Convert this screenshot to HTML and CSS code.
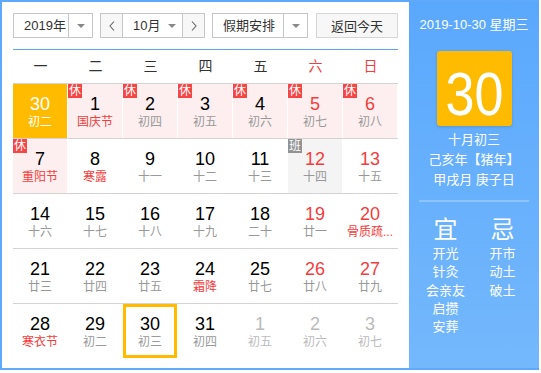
FILE: index.html
```html
<!DOCTYPE html>
<html lang="zh-CN">
<head>
    <meta charset="UTF-8">
    <title>万年历</title>
    <link rel="stylesheet" href="styles.css">
</head>
<body>
    <div class="calendar">
        <div class="main">
            <!-- 顶部工具栏 -->
            <div class="toolbar">
                <div class="select year">
                    <span class="select-text">2019年</span>
                    <span class="select-arrow"><i class="caret"></i></span>
                </div>
                <div class="month-switch">
                    <span class="nav"><svg width="6" height="10" viewBox="0 0 6 10"><polyline points="5,0.5 1,5 5,9.5" fill="none" stroke="#666" stroke-width="1.1"/></svg></span>
                    <span class="month-select">
                        <span class="select-text">10月</span>
                        <i class="caret"></i>
                    </span>
                    <span class="nav"><svg width="6" height="10" viewBox="0 0 6 10"><polyline points="1,0.5 5,5 1,9.5" fill="none" stroke="#666" stroke-width="1.1"/></svg></span>
                </div>
                <div class="select holiday">
                    <span class="select-text">假期安排</span>
                    <span class="select-arrow"><i class="caret"></i></span>
                </div>
                <button class="today-btn">返回今天</button>
            </div>

            <div class="weekdays">
                <span>一</span><span>二</span><span>三</span><span>四</span><span>五</span>
                <span class="weekend">六</span><span class="weekend">日</span>
            </div>

            <div class="days">
                <div class="week">
                    <div class="day hover"><span class="num">30</span><span class="lunar">初二</span></div>
                    <div class="day rest"><span class="tag">休</span><span class="num">1</span><span class="lunar fest">国庆节</span></div>
                    <div class="day rest"><span class="tag">休</span><span class="num">2</span><span class="lunar">初四</span></div>
                    <div class="day rest"><span class="tag">休</span><span class="num">3</span><span class="lunar">初五</span></div>
                    <div class="day rest"><span class="tag">休</span><span class="num">4</span><span class="lunar">初六</span></div>
                    <div class="day rest red"><span class="tag">休</span><span class="num">5</span><span class="lunar">初七</span></div>
                    <div class="day rest red"><span class="tag">休</span><span class="num">6</span><span class="lunar">初八</span></div>
                </div>
                <div class="week">
                    <div class="day rest"><span class="tag">休</span><span class="num">7</span><span class="lunar fest">重阳节</span></div>
                    <div class="day"><span class="num">8</span><span class="lunar fest">寒露</span></div>
                    <div class="day"><span class="num">9</span><span class="lunar">十一</span></div>
                    <div class="day"><span class="num">10</span><span class="lunar">十二</span></div>
                    <div class="day"><span class="num">11</span><span class="lunar">十三</span></div>
                    <div class="day work red"><span class="tag">班</span><span class="num">12</span><span class="lunar">十四</span></div>
                    <div class="day red"><span class="num">13</span><span class="lunar">十五</span></div>
                </div>
                <div class="week">
                    <div class="day"><span class="num">14</span><span class="lunar">十六</span></div>
                    <div class="day"><span class="num">15</span><span class="lunar">十七</span></div>
                    <div class="day"><span class="num">16</span><span class="lunar">十八</span></div>
                    <div class="day"><span class="num">17</span><span class="lunar">十九</span></div>
                    <div class="day"><span class="num">18</span><span class="lunar">二十</span></div>
                    <div class="day red"><span class="num">19</span><span class="lunar">廿一</span></div>
                    <div class="day red"><span class="num">20</span><span class="lunar fest" title="骨质疏松日">骨质疏...</span></div>
                </div>
                <div class="week">
                    <div class="day"><span class="num">21</span><span class="lunar">廿三</span></div>
                    <div class="day"><span class="num">22</span><span class="lunar">廿四</span></div>
                    <div class="day"><span class="num">23</span><span class="lunar">廿五</span></div>
                    <div class="day"><span class="num">24</span><span class="lunar fest">霜降</span></div>
                    <div class="day"><span class="num">25</span><span class="lunar">廿七</span></div>
                    <div class="day red"><span class="num">26</span><span class="lunar">廿八</span></div>
                    <div class="day red"><span class="num">27</span><span class="lunar">廿九</span></div>
                </div>
                <div class="week">
                    <div class="day"><span class="num">28</span><span class="lunar fest">寒衣节</span></div>
                    <div class="day"><span class="num">29</span><span class="lunar">初二</span></div>
                    <div class="day today"><span class="num">30</span><span class="lunar">初三</span></div>
                    <div class="day"><span class="num">31</span><span class="lunar">初四</span></div>
                    <div class="day other"><span class="num">1</span><span class="lunar">初五</span></div>
                    <div class="day other"><span class="num">2</span><span class="lunar">初六</span></div>
                    <div class="day other"><span class="num">3</span><span class="lunar">初七</span></div>
                </div>
            </div>
        </div>

        <!-- 右侧当天信息 -->
        <div class="side">
            <div class="side-date">2019-10-30 星期三</div>
            <div class="big-day"><span>30</span></div>
            <div class="side-lunar">
                <div>十月初三</div>
                <div>己亥年【猪年】</div>
                <div>甲戌月 庚子日</div>
            </div>
            <div class="side-line"></div>
            <div class="almanac">
                <div class="almanac-col">
                    <div class="almanac-title">宜</div>
                    <div>开光</div>
                    <div>针灸</div>
                    <div>会亲友</div>
                    <div>启攒</div>
                    <div>安葬</div>
                </div>
                <div class="almanac-col">
                    <div class="almanac-title">忌</div>
                    <div>开市</div>
                    <div>动土</div>
                    <div>破土</div>
                </div>
            </div>
        </div>
    </div>
</body>
</html>
```

FILE: styles.css
```css
body {
    margin: 0;
    font-family: "Liberation Sans", "Noto Sans CJK SC", sans-serif;
    background: #fff;
}
.calendar {
    display: flex;
    width: 539px;
    height: 370px;
    box-sizing: border-box;
    border: 2px solid #5ea9fa;
    border-right: 0;
    background: #fff;
}
.main {
    width: 407px;
    padding: 11px;
    box-sizing: border-box;
}

/* toolbar */
.toolbar {
    display: flex;
    height: 25px;
    padding-bottom: 11px;
    border-bottom: 1px solid #5ea3f0;
    font-size: 13px;
    color: #333;
}
.select, .month-switch {
    display: flex;
    height: 25px;
    box-sizing: border-box;
    border: 1px solid #c6c6c6;
    background: #fff;
}
.select-text {
    line-height: 23px;
    padding-left: 10px;
}
.year {
    width: 80px;
}
.year .select-text {
    width: 54px;
    box-sizing: border-box;
}
.select-arrow {
    display: flex;
    align-items: center;
    justify-content: center;
    width: 23px;
    border-left: 1px solid #c6c6c6;
}
.caret {
    width: 0;
    height: 0;
    border-left: 4px solid transparent;
    border-right: 4px solid transparent;
    border-top: 4px solid #888;
}
.month-switch {
    width: 105px;
    margin-left: 7px;
}
.nav {
    display: flex;
    align-items: center;
    justify-content: center;
    width: 21px;
    background: #f7f7f7;
}
.month-select {
    display: flex;
    align-items: center;
    width: 59px;
    border-left: 1px solid #c6c6c6;
    border-right: 1px solid #c6c6c6;
}
.month-select .caret {
    margin-left: 8px;
}
.holiday {
    width: 96px;
    margin-left: 7px;
}
.holiday .select-text {
    width: 70px;
    box-sizing: border-box;
}
.today-btn {
    width: 83px;
    height: 25px;
    margin-left: 8px;
    padding: 0;
    border: 1px solid #d6d6d6;
    background: #f7f7f7;
    font-family: inherit;
    font-size: 13px;
    color: #333;
}

/* weekday header */
.weekdays {
    display: grid;
    grid-template-columns: repeat(7, 55px);
    height: 33px;
    line-height: 33px;
    text-align: center;
    font-size: 14px;
    color: #333;
}
.weekdays .weekend {
    color: #f43d3d;
}

/* day grid */
.week {
    display: grid;
    grid-template-columns: repeat(7, 55px);
    height: 54px;
    border-top: 1px solid #d3d3d3;
}
.day {
    position: relative;
    margin-right: 1px;
    padding-top: 10px;
    text-align: center;
    color: #000;
}
.num {
    display: block;
    font-size: 18px;
    line-height: 20px;
}
.lunar {
    display: block;
    font-size: 12px;
    line-height: 16px;
    color: #999;
    white-space: nowrap;
}
.lunar.fest {
    color: #f43d3d;
}
.day.red .num {
    color: #f43d3d;
}
.day.rest {
    background: #fdefef;
}
.day.work {
    background: #f4f4f4;
}
.day.hover {
    background: #ffbb00;
}
.day.hover .num, .day.hover .lunar {
    color: #fff;
}
.day.today {
    box-shadow: inset 0 0 0 3px #ffbb00;
}
.day.other .num, .day.other .lunar {
    color: #bbb;
}
.tag {
    position: absolute;
    top: 0;
    left: 0;
    width: 14px;
    height: 14px;
    line-height: 14px;
    font-size: 12px;
    color: #fff;
    background: #f54545;
}
.work .tag {
    background: #929292;
}

/* side panel */
.side {
    width: 130px;
    background: linear-gradient(#5aa8fd, #74b8fc);
    color: #fff;
    text-align: center;
}
.side-date {
    margin-top: 13px;
    font-size: 13px;
    line-height: 20px;
}
.big-day {
    width: 75px;
    height: 75px;
    margin: 16px auto 0;
    background: #ffbb00;
    border-radius: 3px;
    box-shadow: 0 1px 3px rgba(0, 0, 0, 0.15);
    font-size: 62px;
    line-height: 85px;
}
.big-day span {
    display: inline-block;
    transform: scaleX(0.84);
}
.side-lunar {
    margin-top: 4px;
    font-size: 13px;
    line-height: 20px;
}
.side-line {
    width: 110px;
    height: 2px;
    margin: 10px auto 0;
    background: #8ec4fb;
}
.almanac {
    display: flex;
    padding: 0 8px;
    margin-top: 13px;
    font-size: 13px;
    line-height: 18.3px;
}
.almanac-col {
    width: 57px;
}
.almanac-title {
    font-size: 24px;
    line-height: 30px;
}
```
